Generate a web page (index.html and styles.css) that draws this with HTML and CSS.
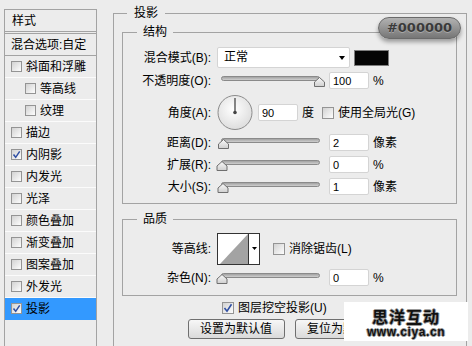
FILE: index.html
```html
<!DOCTYPE html>
<html lang="zh-CN">
  <head>
    <meta charset="UTF-8" />
    <meta name="viewport" content="width=device-width, initial-scale=1.0" />
    <title>图层样式</title>
    <link rel="stylesheet" href="styles.css">
  </head>
  <body>
    <svg class="defs" width="0" height="0">
      <defs>
        <linearGradient id="track" x1="0" y1="0" x2="0" y2="1">
          <stop offset="0" stop-color="#9a9a9a" />
          <stop offset="1" stop-color="#d6d6d6" />
        </linearGradient>
        <linearGradient id="thumb" x1="0" y1="0" x2="0" y2="1">
          <stop offset="0" stop-color="#fafafa" />
          <stop offset="1" stop-color="#cfcfcf" />
        </linearGradient>
        <radialGradient id="dial" cx="0.45" cy="0.4" r="0.6">
          <stop offset="0" stop-color="#ffffff" />
          <stop offset="1" stop-color="#dedede" />
        </radialGradient>
      </defs>
    </svg>
    <div class="dialog">
      <ul class="style-list">
        <li class="list-head">样式</li>
        <li class="list-blend">混合选项:自定</li>
        <li><span class="box"></span>斜面和浮雕</li>
        <li class="sub"><span class="box"></span>等高线</li>
        <li class="sub"><span class="box"></span>纹理</li>
        <li><span class="box"></span>描边</li>
        <li><span class="box"><svg width="9" height="9"><path d="M1.5 4.5l2.2 2.8 4-6" fill="none" stroke="#2f4fa3" stroke-width="1.5" /></svg></span>内阴影</li>
        <li><span class="box"></span>内发光</li>
        <li><span class="box"></span>光泽</li>
        <li><span class="box"></span>颜色叠加</li>
        <li><span class="box"></span>渐变叠加</li>
        <li><span class="box"></span>图案叠加</li>
        <li><span class="box"></span>外发光</li>
        <li class="active"><span class="box"><svg width="9" height="9"><path d="M1.5 4.5l2.2 2.8 4-6" fill="none" stroke="#2f4fa3" stroke-width="1.5" /></svg></span>投影</li>
      </ul>

      <fieldset class="group outer">
        <legend>投影</legend>

        <fieldset class="group structure">
          <legend>结构</legend>
          <div class="row row-blend">
            <span class="label">混合模式(B):</span>
            <div class="select">正常<span class="caret"></span></div>
            <span class="swatch"></span>
          </div>
          <div class="row row-opacity">
            <span class="label">不透明度(O):</span>
            <svg class="slider" width="110" height="12">
              <rect x="5.5" y="1.5" width="98" height="4" rx="2" fill="url(#track)" stroke="#8a8a8a" />
              <path transform="translate(98 0)" d="M0.5 11.5h10v-4.5l-5-4.5-5 4.5z" fill="url(#thumb)" stroke="#6f6f6f" />
            </svg>
            <input class="num" type="text" value="100" />
            <span class="unit">%</span>
          </div>
          <div class="row row-angle">
            <span class="label">角度(A):</span>
            <svg class="dial" width="36" height="36">
              <circle cx="18" cy="17.5" r="17" fill="url(#dial)" stroke="#8c8c8c" />
              <line x1="18" y1="17.5" x2="18" y2="3" stroke="#555" stroke-width="1.4" />
              <circle cx="18" cy="17.5" r="1.8" fill="#444" />
            </svg>
            <input class="num" type="text" value="90" />
            <span class="unit">度</span>
            <span class="box big"></span>
            <span>使用全局光(G)</span>
          </div>
          <div class="row row-distance">
            <span class="label">距离(D):</span>
            <svg class="slider" width="110" height="12">
              <rect x="5.5" y="1.5" width="98" height="4" rx="2" fill="url(#track)" stroke="#8a8a8a" />
              <path transform="translate(2 0)" d="M0.5 11.5h10v-4.5l-5-4.5-5 4.5z" fill="url(#thumb)" stroke="#6f6f6f" />
            </svg>
            <input class="num" type="text" value="2" />
            <span class="unit">像素</span>
          </div>
          <div class="row row-spread">
            <span class="label">扩展(R):</span>
            <svg class="slider" width="110" height="12">
              <rect x="5.5" y="1.5" width="98" height="4" rx="2" fill="url(#track)" stroke="#8a8a8a" />
              <path transform="translate(0.5 0)" d="M0.5 11.5h10v-4.5l-5-4.5-5 4.5z" fill="url(#thumb)" stroke="#6f6f6f" />
            </svg>
            <input class="num" type="text" value="0" />
            <span class="unit">%</span>
          </div>
          <div class="row row-size">
            <span class="label">大小(S):</span>
            <svg class="slider" width="110" height="12">
              <rect x="5.5" y="1.5" width="98" height="4" rx="2" fill="url(#track)" stroke="#8a8a8a" />
              <path transform="translate(1.5 0)" d="M0.5 11.5h10v-4.5l-5-4.5-5 4.5z" fill="url(#thumb)" stroke="#6f6f6f" />
            </svg>
            <input class="num" type="text" value="1" />
            <span class="unit">像素</span>
          </div>
        </fieldset>

        <fieldset class="group quality">
          <legend>品质</legend>
          <div class="row row-contour">
            <span class="label">等高线:</span>
            <svg class="contour" width="43" height="32">
              <rect x="0.5" y="0.5" width="42" height="31" fill="#fff" stroke="#333" />
              <polygon points="3,31 31,1 31,31" fill="#a3a3a3" />
              <line x1="31.5" y1="0" x2="31.5" y2="32" stroke="#333" />
              <polygon points="35,14 40,14 37.5,17" fill="#000" />
            </svg>
            <span class="box big"></span>
            <span>消除锯齿(L)</span>
          </div>
          <div class="row row-noise">
            <span class="label">杂色(N):</span>
            <svg class="slider" width="110" height="12">
              <rect x="5.5" y="1.5" width="98" height="4" rx="2" fill="url(#track)" stroke="#8a8a8a" />
              <path transform="translate(0.5 0)" d="M0.5 11.5h10v-4.5l-5-4.5-5 4.5z" fill="url(#thumb)" stroke="#6f6f6f" />
            </svg>
            <input class="num" type="text" value="0" />
            <span class="unit">%</span>
          </div>
        </fieldset>

        <div class="knockout">
          <span class="box big"><svg width="10" height="10"><path d="M1.5 5l2.5 3.2 4.5-7" fill="none" stroke="#2f4fa3" stroke-width="1.6" /></svg></span>
          <span>图层挖空投影(U)</span>
        </div>
        <div class="buttons">
          <button class="btn" type="button">设置为默认值</button>
          <button class="btn" type="button">复位为默认值</button>
        </div>
      </fieldset>

      <div class="badge">#000000</div>
      <div class="watermark">
        <span class="wm-title">思洋互动</span>
        <span class="wm-url">www.ciya.cn</span>
      </div>
    </div>
  </body>
</html>
```

FILE: styles.css
```css
* {
  box-sizing: border-box;
}
body {
  margin: 0;
  background-color: #ececec;
  font-family: "Liberation Sans", "Noto Sans CJK SC", sans-serif;
  font-size: 12px;
  line-height: 14px;
  color: #000;
  overflow: hidden;
}
.defs {
  display: block;
  width: 0;
  height: 0;
}
.dialog {
  position: relative;
  display: flex;
  align-items: flex-start;
  width: 472px;
  height: 346px;
  padding-left: 4px;
  overflow: hidden;
}

/* left list of styles */
.style-list {
  list-style: none;
  margin: 9px 0 0;
  padding: 0;
  width: 93px;
  height: 345px;
  border: 1px solid #a3a3a3;
  flex: none;
}
.style-list li {
  display: flex;
  align-items: center;
  height: 22px;
  padding-left: 6px;
  border-bottom: 1px solid #fbfbfb;
  white-space: nowrap;
}
.style-list li.sub {
  padding-left: 20px;
}
.style-list .list-head {
  padding-left: 7px;
  border-bottom: 1px solid #a3a3a3;
}
.style-list .list-blend {
  margin-top: 1px;
  height: 23px;
  padding-left: 6px;
  border-top: 1px solid #a3a3a3;
  border-bottom: 1px solid #a3a3a3;
}
.style-list li.active {
  background-color: #3399ff;
  border-bottom-color: #3399ff;
}
.box {
  display: inline-flex;
  align-items: center;
  justify-content: center;
  width: 11px;
  height: 11px;
  margin-right: 4px;
  border: 1px solid #949494;
  background: linear-gradient(135deg, #d2d2d2, #fdfdfd);
  flex: none;
}
.box.big {
  width: 12px;
  height: 12px;
}

/* fieldsets */
.group {
  margin: 0;
  padding: 0;
  border: 1px solid #a3a3a3;
  min-inline-size: 0;
}
.group legend {
  padding: 0 7px;
  line-height: 14px;
}
.outer {
  margin: 6px 0 0 16px;
  width: 354px;
  height: 370px;
  padding: 0 9px 0 8px;
  flex: none;
}
.outer > legend {
  margin-left: 5px;
}
.structure > legend,
.quality > legend {
  margin-left: 14px;
  padding: 0 6px;
}
.structure {
  margin-top: 5px;
  padding: 8px 0 8px;
}
.quality {
  margin-top: 8px;
  padding: 7px 0 9px;
}

.row {
  display: flex;
  align-items: center;
  height: 17px;
  white-space: nowrap;
}
.label {
  width: 88px;
  margin-right: 6px;
  text-align: right;
  flex: none;
}
.row-blend {
  height: 21px;
}
.row-opacity {
  margin-top: 4px;
}
.row-angle {
  height: 35px;
  margin-top: 6px;
}
.row-distance {
  margin-top: 4px;
}
.row-spread,
.row-size {
  margin-top: 5px;
}
.row-contour {
  height: 32px;
}
.row-noise {
  margin-top: 4px;
}

.select {
  position: relative;
  width: 133px;
  height: 21px;
  padding-left: 6px;
  line-height: 19px;
  background-color: #fff;
  border: 1px solid #d4d4d4;
  border-radius: 2px;
}
.caret {
  position: absolute;
  right: 4px;
  top: 8px;
  border-left: 3.5px solid transparent;
  border-right: 3.5px solid transparent;
  border-top: 4px solid #000;
}
.swatch {
  width: 35px;
  height: 16px;
  margin-left: 4px;
  background-color: #050505;
  border: 1px solid #7d7d7d;
}
.slider {
  margin-left: -1px;
  margin-right: 3px;
  flex: none;
}
.num {
  width: 40px;
  height: 17px;
  padding: 0 0 0 3px;
  border: 1px solid #d4d4d4;
  border-radius: 2px;
  background-color: #fff;
  font-family: "Liberation Sans", sans-serif;
  font-size: 11px;
  color: #000;
  outline: none;
}
.unit {
  margin-left: 4px;
}
.dial {
  margin-right: 5px;
  flex: none;
}
.row-angle .box {
  margin-left: 8px;
}
.contour {
  margin-right: 13px;
  flex: none;
}

.knockout {
  display: flex;
  align-items: center;
  height: 14px;
  margin-top: 5px;
  padding-left: 100px;
}
.buttons {
  display: flex;
  justify-content: center;
  gap: 10px;
  margin-top: 4px;
}
.btn {
  width: 97px;
  height: 20px;
  padding: 0;
  border: 1px solid #6f6f6f;
  border-radius: 3px;
  background: linear-gradient(#f7f7f7, #dadada);
  font-family: "Liberation Sans", "Noto Sans CJK SC", sans-serif;
  font-size: 12px;
  line-height: 18px;
  color: #000;
}

/* colour badge over the group border */
.badge {
  position: absolute;
  left: 378px;
  top: 17px;
  width: 83px;
  height: 22px;
  border: 1px solid #6a6a6a;
  border-radius: 11px;
  background: linear-gradient(#b2b2b2, #767676);
  box-shadow: 0 3px 4px rgba(0, 0, 0, 0.35);
  color: #3a3a3a;
  font-family: "DejaVu Sans", sans-serif;
  font-weight: bold;
  font-size: 13px;
  line-height: 20px;
  text-align: center;
  text-shadow: 0 1px 0 rgba(255, 255, 255, 0.3);
}

.watermark {
  position: absolute;
  left: 344px;
  top: 302px;
  width: 124px;
  height: 39px;
  display: flex;
  flex-direction: column;
  align-items: center;
  padding-top: 6px;
  background-color: #fff;
}
.wm-title {
  font-family: "Noto Sans CJK SC", sans-serif;
  font-weight: bold;
  font-size: 16px;
  line-height: 17px;
  height: 17px;
  letter-spacing: 1px;
  color: #111;
  text-shadow: 1px 0 0 #999, -1px 0 0 #999, 0 1px 0 #999, 0 -1px 0 #999;
}
.wm-url {
  margin-top: 2px;
  font-family: "Liberation Sans", sans-serif;
  font-weight: bold;
  font-size: 12px;
  line-height: 11px;
  height: 11px;
  letter-spacing: 0.6px;
  color: #111;
  text-shadow: 1px 0 0 #999, -1px 0 0 #999, 0 1px 0 #999, 0 -1px 0 #999;
}
```
